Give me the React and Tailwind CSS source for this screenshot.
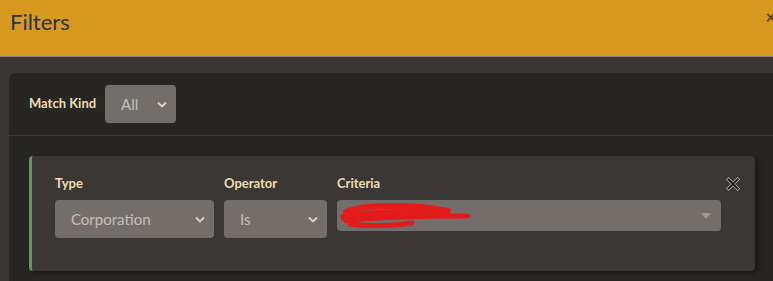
import React from "react";

const Chevron = () => (
  <svg width="10" height="7" viewBox="0 0 10 7" className="shrink-0">
    <path d="M1 1.5 L5 5.5 L9 1.5" fill="none" stroke="#d9d4ce" strokeWidth="1.8" />
  </svg>
);

const SelectBox = ({ value, className }) => (
  <div
    className={`flex items-center justify-between h-[38px] rounded-[4px] bg-[#736e6a] pl-[16px] pr-[9px] text-[15px] text-[#c4beb8] ${className}`}
  >
    <span>{value}</span>
    <Chevron />
  </div>
);

const Field = ({ label, children, className }) => (
  <div className={`flex flex-col ${className}`}>
    <span className="text-[13px] font-bold text-[#efdcae] h-[18px] leading-[18px] mb-[8px]">
      {label}
    </span>
    {children}
  </div>
);

export default function App() {
  return (
    <div
      className="w-[773px] h-[281px] overflow-hidden bg-[#3a3633]"
      style={{ fontFamily: "Lato, 'Noto Sans', sans-serif" }}
    >
      {/* header */}
      <div className="relative h-[57px] bg-[#d8991f] border-b border-[#8d8781] flex items-center px-[10px]">
        <span className="text-[22px] text-[#2a3340] -mt-[13px]">Filters</span>
        <span className="absolute right-[-3px] top-[4px] text-[18px] font-bold text-[#5a4318]">
          ×
        </span>
      </div>

      {/* body */}
      <div className="pt-[16px] pl-[9px]">
        <div className="bg-[#272625] rounded-tl-[6px] w-[780px] h-[220px]">
          {/* match kind */}
          <div className="h-[63px] flex items-center gap-[9px] px-[20px] border-b border-[#3a3735]">
            <span className="text-[13px] font-bold text-[#efdcae]">Match Kind</span>
            <SelectBox value="All" className="w-[71px]" />
          </div>

          {/* rule card */}
          <div className="pt-[20px] pl-[20px]">
            <div className="relative w-[726px] h-[115px] bg-[#3b3734] rounded-[4px] border-l-[3px] border-[#5e9b62] shadow-[3px_2px_4px_rgba(0,0,0,0.35)] flex gap-[10px] pl-[23px] pt-[18px]">
              <Field label="Type" className="w-[159px]">
                <SelectBox value="Corporation" />
              </Field>
              <Field label="Operator" className="w-[103px]">
                <SelectBox value="Is" />
              </Field>
              <Field label="Criteria" className="w-[384px]">
                <div className="relative h-[31px] rounded-[4px] bg-[#736e6a] flex items-center justify-end pr-[10px]">
                  <svg width="10" height="6" viewBox="0 0 10 6">
                    <path d="M0 0 L10 0 L5 6 Z" fill="#9c9791" />
                  </svg>
                  <svg
                    className="absolute left-[3px] top-[2px]"
                    width="134"
                    height="28"
                    viewBox="0 0 134 28"
                  >
                    <g fill="none" stroke="#e41b1b" strokeLinecap="round" strokeLinejoin="round">
                      <path d="M6 10 C20 4 50 3 80 5 C95 6 100 8 108 9" strokeWidth="6" />
                      <path d="M4 15 C30 10 70 10 105 11" strokeWidth="7" />
                      <path d="M6 19 C40 14 90 14 128 14" strokeWidth="5" />
                      <path d="M10 22 C30 25 50 24 72 21" strokeWidth="5" />
                    </g>
                  </svg>
                </div>
              </Field>
              {/* remove rule */}
              <svg
                className="absolute left-[694px] top-[21px]"
                width="14"
                height="14"
                viewBox="0 0 14 14"
              >
                <path d="M2.5 2.5 L11.5 11.5 M11.5 2.5 L2.5 11.5" stroke="#a9a39d" strokeWidth="3.6" strokeLinecap="square" />
                <path d="M2.5 2.5 L11.5 11.5 M11.5 2.5 L2.5 11.5" stroke="#1c1b1a" strokeWidth="1.8" strokeLinecap="square" />
              </svg>
            </div>
          </div>
        </div>
      </div>
    </div>
  );
}
